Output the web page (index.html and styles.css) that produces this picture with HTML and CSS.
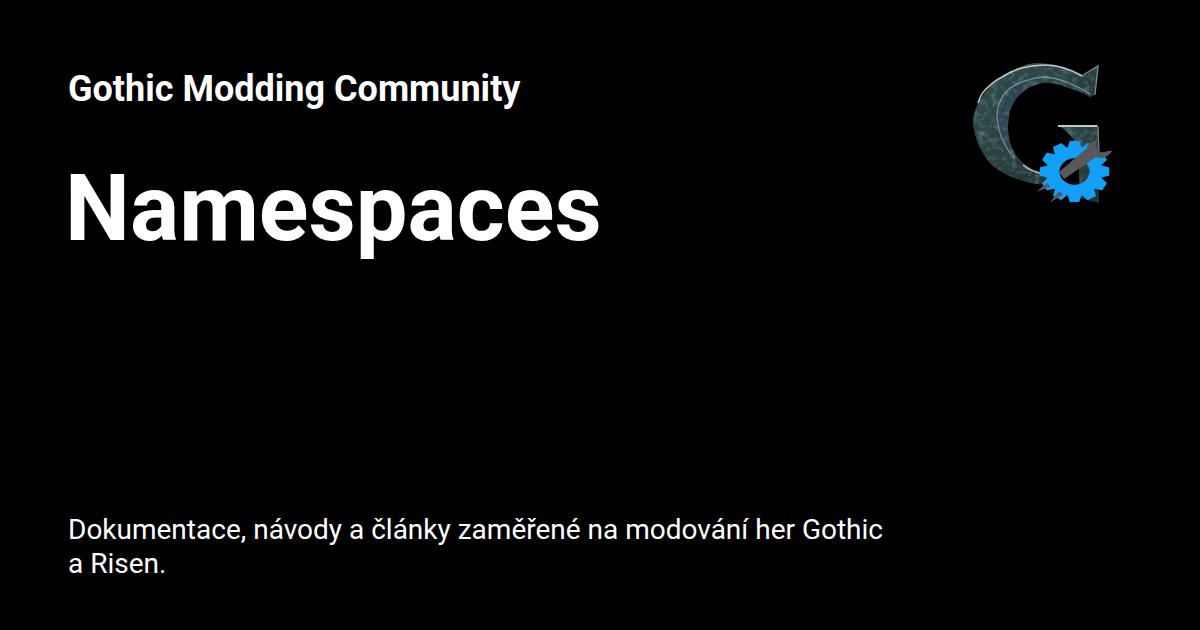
FILE: index.html
```html
<!DOCTYPE html>
<html lang="cs">
<head>
<meta charset="utf-8">
<title>Namespaces</title>
<link rel="stylesheet" href="styles.css">
</head>
<body>
<main class="card">
  <div class="top">
    <div class="heads">
      <div class="site">Gothic Modding Community</div>
      <h1 class="title">Namespaces</h1>
    </div>
    <svg class="logo" viewBox="0 0 170 170" aria-hidden="true">
      <defs>
        <linearGradient id="metal" x1="0" y1="0" x2="1" y2="1">
          <stop offset="0" stop-color="#2f4d4c"/>
          <stop offset=".5" stop-color="#2a3f40"/>
          <stop offset="1" stop-color="#1a292c"/>
        </linearGradient>
        <filter id="rough" x="0" y="0" width="100%" height="100%" color-interpolation-filters="sRGB">
          <feTurbulence type="fractalNoise" baseFrequency="0.16" numOctaves="3" seed="7" result="n"/>
          <feColorMatrix in="n" type="matrix" values="0 0 0 0 .42  0 0 0 0 .55  0 0 0 0 .55  1.5 0 0 0 -.68" result="spots"/>
          <feComposite in="spots" in2="SourceGraphic" operator="in" result="clipped"/>
          <feMerge><feMergeNode in="SourceGraphic"/><feMergeNode in="clipped"/></feMerge>
        </filter>
        <polygon id="tooth" points="-6.5,-26 -4.2,-34 4.2,-34 6.5,-26"/>
      </defs>
      <g filter="url(#rough)">
        <path fill="url(#metal)" d="M139 15 L123 25 C108 17 92 13 77 13 C60 14 44 24 33 33 C22 44 14 58 13 70 C13 84 20 102 30 113 C40 123 54 129 67 132 C74 134 82 135 92 135 L92 125 C80 123 68 118 60 110 C52 102 48 90 48 78 C48 66 50 58 55 50 C60 44 64 41 68 38 C74 35 80 33 85 33 C92 33 100 34 105 37 C116 40 124 43 130 47 L135 45 Z"/>
        <path fill="url(#metal)" d="M98 75 L138 75 L139 153 L120 148 L118 100 C116 90 108 82 98 75 Z"/>
        <path class="band" d="M37 63 C38 53 42 46 48 40 C54 35 60 32 68 30 C74 28 80 27 85 27 L85 33 C78 33 74 35 68 38 C62 42 58 46 55 50 C50 58 48 66 48 78 C48 90 52 102 60 110 L55 108 C44 98 37 80 37 63 Z"/>
      </g>
      <path class="shine bright" d="M18 53 C20 47 22 43 25 40 C30 35 36 30 42 27 C48 23 55 20 62 18 C70 16 78 15 85 15 C98 15 110 19 122 26" />
      <path class="shine" d="M37 63 C38 53 42 46 48 40 C54 35 60 32 68 30 C74 28 80 27 85 27 C100 28 118 36 130 44" />
      <path class="shine" d="M37 63 C37 80 44 98 55 108" />
      <path class="shine bright" d="M63 115 C68 119 74 122 80 123" />
      <path class="shine bright wide" d="M98 76 L137 76" />
      <path class="shine" d="M138 76 L139 105" />
      <path class="shine" d="M123 25 L138 16 L135 45" />
      <g class="gear" transform="translate(114.5 121.5) scale(1 .88)">
        <g class="teeth">
          <use href="#tooth"/>
          <use href="#tooth" transform="rotate(30)"/>
          <use href="#tooth" transform="rotate(60)"/>
          <use href="#tooth" transform="rotate(90)"/>
          <use href="#tooth" transform="rotate(120)"/>
          <use href="#tooth" transform="rotate(150)"/>
          <use href="#tooth" transform="rotate(180)"/>
          <use href="#tooth" transform="rotate(210)"/>
          <use href="#tooth" transform="rotate(240)"/>
          <use href="#tooth" transform="rotate(270)"/>
          <use href="#tooth" transform="rotate(300)"/>
          <use href="#tooth" transform="rotate(330)"/>
        </g>
        <circle class="ring" r="21.5"/>
      </g>
      <path class="wrench" d="M99 122 L127 98 C126 93 133 93 137 89 C138 90 135 95 135 97 L140 102 C144 103 149 100 152 101 C149 106 143 110 136 107 L104 129 Z"/>
      <path class="wrench" d="M77 142 C80 138 84 135 88 133 L90 137 C85 138 81 140 77 142 Z"/>
      <path class="wrench" d="M90 153 C93 148 96 144 100 141 L103 145 C98 147 94 150 90 153 Z"/>
    </svg>
  </div>
  <p class="desc">Dokumentace, návody a články zaměřené na modování her Gothic a Risen.</p>
</main>
</body>
</html>
```
FILE: styles.css
```css
html, body { margin: 0; padding: 0; background: #000; }
.card {
  width: 1200px; height: 630px; box-sizing: border-box;
  padding: 68px 68px 48px;
  display: flex; flex-direction: column; justify-content: space-between;
  color: #fff; font-family: Roboto, sans-serif; overflow: hidden;
}
.top { display: flex; justify-content: space-between; align-items: flex-start; }
.site { font-size: 36px; font-weight: 700; line-height: 42px; }
.title { margin: 45px 0 0 -3px; font-size: 92px; font-weight: 700; line-height: 108px; }
.logo { width: 170px; height: 170px; margin-top: -18px; margin-right: 2px; }
.band { fill: #2d4450; }
.shine { fill: none; stroke: #7f9a9c; stroke-width: 1.3; opacity: .85; }
.shine.bright { stroke: #d5e0e0; stroke-width: 1.6; }
.shine.wide { stroke-width: 2; }
.teeth { fill: #12a0f6; stroke: #12a0f6; stroke-width: 1.5; stroke-linejoin: round; }
.ring { fill: none; stroke: #12a0f6; stroke-width: 13; }
.wrench { fill: #58595b; }
.desc { margin: 0 0 1px; width: 830px; font-size: 28px; line-height: 34px; }
```
